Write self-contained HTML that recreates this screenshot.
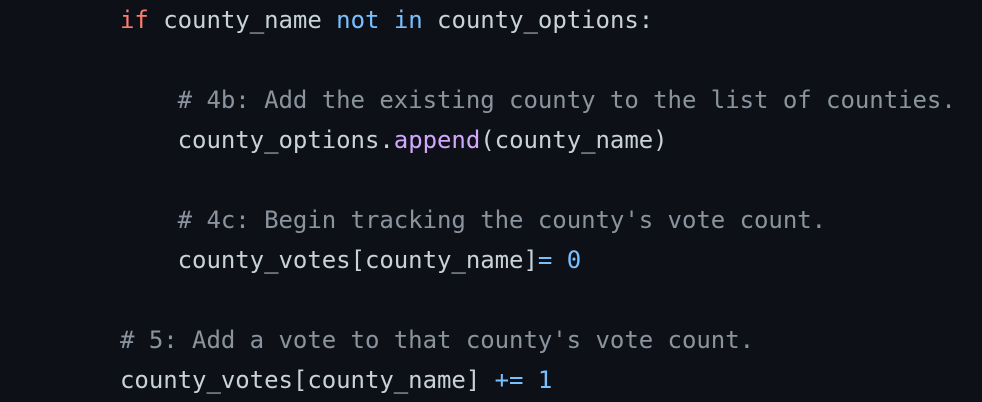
<!DOCTYPE html>
<html><head><meta charset="utf-8"><style>
html,body{margin:0;padding:0;background:#0d1117;width:982px;height:402px;overflow:hidden}
pre{margin:0;padding:0 0 0 120px;font-family:"DejaVu Sans Mono","Liberation Mono",monospace;font-size:24px;letter-spacing:-0.04px;line-height:40px;color:#c9d1d9;white-space:pre}
.k{color:#ff7b72}.b{color:#79c0ff}.c{color:#8b949e}.f{color:#d2a8ff}
</style></head><body><pre><span class="k">if</span> county_name <span class="b">not</span> <span class="b">in</span> county_options:

    <span class="c"># 4b: Add the existing county to the list of counties.</span>
    county_options.<span class="f">append</span>(county_name)

    <span class="c"># 4c: Begin tracking the county's vote count.</span>
    county_votes[county_name]<span class="b">=</span> <span class="b">0</span>

<span class="c"># 5: Add a vote to that county's vote count.</span>
county_votes[county_name] <span class="b">+=</span> <span class="b">1</span></pre></body></html>
